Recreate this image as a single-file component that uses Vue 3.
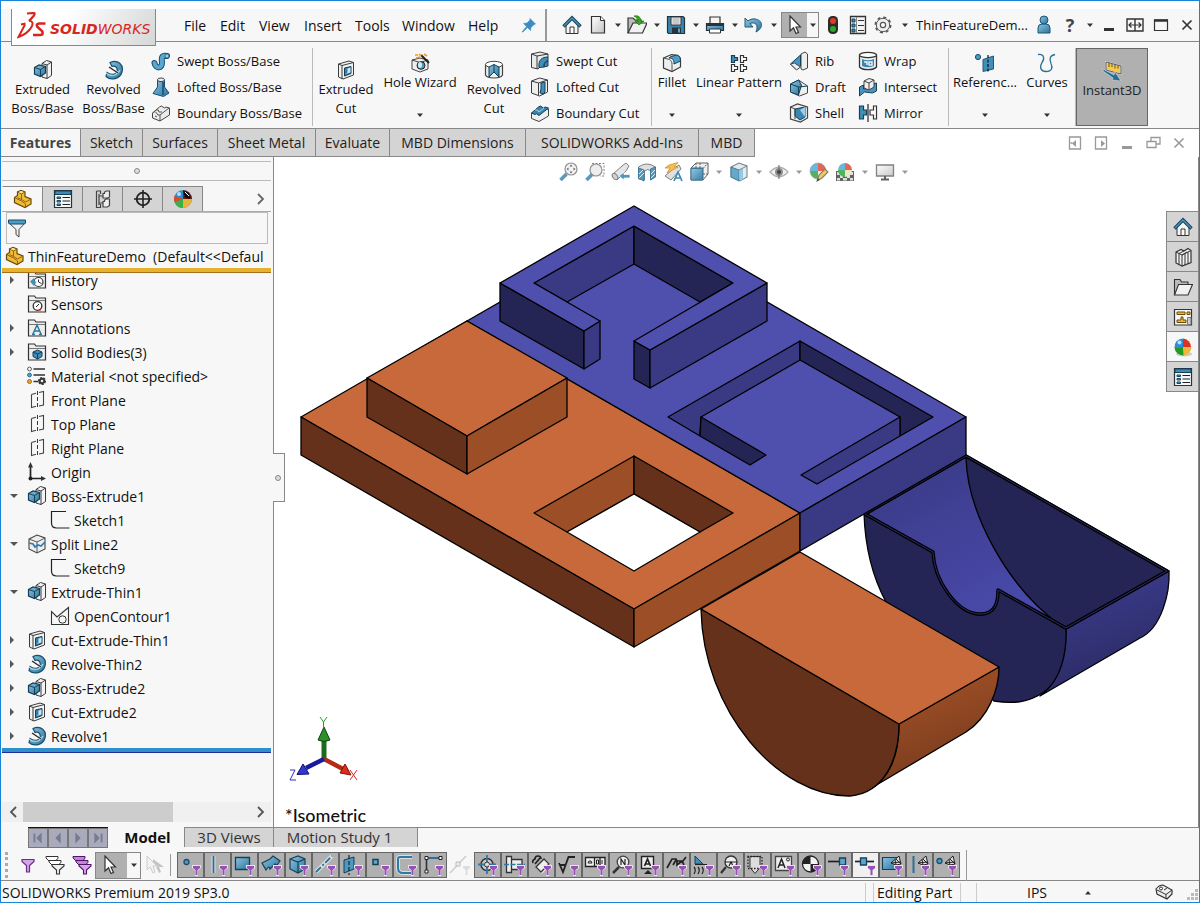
<script setup>
import { ref } from 'vue'

const menus = ['File', 'Edit', 'View', 'Insert', 'Tools', 'Window', 'Help']
const quick = [
  { icon: 'open', label: 'Open' },
  { icon: 'save', label: 'Save' },
  { icon: 'print', label: 'Print' },
  { icon: 'undo', label: 'Undo' },
]
const bossStack = [
  { icon: 'swept', label: 'Swept Boss/Base' },
  { icon: 'loft', label: 'Lofted Boss/Base' },
  { icon: 'boundary', label: 'Boundary Boss/Base' },
]
const cutStack = [
  { icon: 'sweptcut', label: 'Swept Cut' },
  { icon: 'loftcut', label: 'Lofted Cut' },
  { icon: 'boundcut', label: 'Boundary Cut' },
]
const detailStack = [
  { icon: 'rib', label: 'Rib' },
  { icon: 'draft', label: 'Draft' },
  { icon: 'shell', label: 'Shell' },
]
const shapeStack = [
  { icon: 'wrap', label: 'Wrap' },
  { icon: 'intersect', label: 'Intersect' },
  { icon: 'mirror', label: 'Mirror' },
]
const tabs = ['Features', 'Sketch', 'Surfaces', 'Sheet Metal', 'Evaluate', 'MBD Dimensions', 'SOLIDWORKS Add-Ins', 'MBD']
const panelTabs = [
  { icon: 'part', label: 'FeatureManager' },
  { icon: 'props', label: 'PropertyManager' },
  { icon: 'config', label: 'ConfigurationManager' },
  { icon: 'target', label: 'DimXpertManager' },
  { icon: 'ball', label: 'DisplayManager' },
]
const tree = [
  { icon: 'history', label: 'History', state: 'closed' },
  { icon: 'sensors', label: 'Sensors' },
  { icon: 'annot', label: 'Annotations', state: 'closed' },
  { icon: 'bodies', label: 'Solid Bodies(3)', state: 'closed' },
  { icon: 'material', label: 'Material <not specified>' },
  { icon: 'plane', label: 'Front Plane' },
  { icon: 'plane', label: 'Top Plane' },
  { icon: 'plane', label: 'Right Plane' },
  { icon: 'origin', label: 'Origin' },
  { icon: 'extrude', label: 'Boss-Extrude1', state: 'open' },
  { icon: 'sketch', label: 'Sketch1', child: true },
  { icon: 'split', label: 'Split Line2', state: 'open' },
  { icon: 'sketch', label: 'Sketch9', child: true },
  { icon: 'extrude', label: 'Extrude-Thin1', state: 'open' },
  { icon: 'contour', label: 'OpenContour1', child: true },
  { icon: 'cut', label: 'Cut-Extrude-Thin1', state: 'closed' },
  { icon: 'revolve', label: 'Revolve-Thin2', state: 'closed' },
  { icon: 'extrude', label: 'Boss-Extrude2', state: 'closed' },
  { icon: 'cut', label: 'Cut-Extrude2', state: 'closed' },
  { icon: 'revolve', label: 'Revolve1', state: 'closed' },
]
const viewTools = [
  { icon: 'zoomfit', label: 'Zoom to Fit' },
  { icon: 'zoomarea', label: 'Zoom to Area' },
  { icon: 'prevview', label: 'Previous View' },
  { icon: 'section', label: 'Section View' },
  { icon: 'dynannot', label: 'Annotation Views' },
  { icon: 'orient', label: 'View Orientation', more: true },
  { icon: 'display', label: 'Display Style', more: true },
  { icon: 'eye', label: 'Hide/Show', more: true },
  { icon: 'appear', label: 'Edit Appearance' },
  { icon: 'scene', label: 'Apply Scene', more: true },
  { icon: 'monitor', label: 'View Settings', more: true },
]
const taskPane = [
  { icon: 'home', label: 'Resources' },
  { icon: 'books', label: 'Design Library' },
  { icon: 'folder', label: 'File Explorer' },
  { icon: 'palette', label: 'View Palette' },
  { icon: 'ball2', label: 'Appearances', on: true },
  { icon: 'props', label: 'Custom Properties' },
]
const filtersA = ['vertex', 'edge', 'face', 'surf', 'solid', 'axis', 'planes', 'skpoint', 'sksketch', 'sksegment']
const filtersB = ['center', 'cline', 'dim', 'rough', 'gtol', 'note', 'datum', 'weld', 'weldsym', 'dtarget', 'cosmetic', 'block', 'mass', 'routepoint', 'connpoint', 'meshface', 'meshedge', 'meshpoint']
const filterText = ref('')
</script>

<template>
  <svg class="defs" aria-hidden="true">
    <defs>
      <linearGradient id="gb" x1="0" y1="0" x2="1" y2="1"><stop offset="0" stop-color="#8cc4e2" /><stop offset="1" stop-color="#2b749b" /></linearGradient>
      <linearGradient id="gw" x1="0" y1="0" x2="1" y2="1"><stop offset="0" stop-color="#ffffff" /><stop offset="1" stop-color="#c4c4c4" /></linearGradient>
      <linearGradient id="inner" x1="0" y1="0" x2="0.6" y2="1"><stop offset="0" stop-color="#393984" /><stop offset="1" stop-color="#4949aa" /></linearGradient>
      <linearGradient id="outb" x1="0" y1="0" x2="0.4" y2="1"><stop offset="0.3" stop-color="#393987" /><stop offset="1" stop-color="#2a2a62" /></linearGradient>
      <linearGradient id="outo" x1="0" y1="0" x2="0.4" y2="1"><stop offset="0.3" stop-color="#9c4e26" /><stop offset="1" stop-color="#763a1d" /></linearGradient>
    </defs>
    <!-- title bar -->
    <symbol id="home" viewBox="0 0 20 20"><path d="M4 10v8.500h12V10L10 4z" fill="#f4f4f4" stroke="#333" /><path d="M8 18v-6h4v6" fill="#fff" stroke="#333" /><path d="M1.500 11.500 10 3l8.500 8.500" fill="none" stroke="#163f57" stroke-width="3.400" /><path d="M2 11 10 3l8 8" fill="none" stroke="#4a93bb" stroke-width="1.500" /></symbol>
    <symbol id="new" viewBox="0 0 20 20"><path d="M3.500 1.500h9l4 4v12.500h-13z" fill="url(#gw)" stroke="#333" stroke-width="1.200" /><path d="M12.500 1.500v4h4" fill="#fff" stroke="#333" /></symbol>
    <symbol id="open" viewBox="0 0 20 20"><path d="M1 18V3h5l2 2h6v4" fill="#bbb" stroke="#333" stroke-width="1.200" /><path d="M1 18 6 8h14l-4.500 10z" fill="#f1f1f1" stroke="#333" stroke-width="1.200" /><path d="M7 1c4-1 7 1 7 5h3l-5 4-4-4h3c0-2-2-4-4-5z" fill="#35a81b" stroke="#15680a" stroke-width=".6" /></symbol>
    <symbol id="save" viewBox="0 0 20 20"><path d="M1.500 1.500h15.500l1.500 1.500v15.500h-16l-1-1z" fill="#3984ad" stroke="#20323d" stroke-width="1.200" /><path d="M5 2h10v8H5z" fill="#f5f5f5" stroke="#333" /><path d="M6.500 4h7M6.500 6h7M6.500 8h7" stroke="#999" /><path d="M6 12.500h9v6H6z" fill="#263139" /><path d="M12 13.500h2v4h-2z" fill="#5aa5cf" /></symbol>
    <symbol id="print" viewBox="0 0 20 20"><path d="M5 9V2h10v7" fill="#f4f4f4" stroke="#333" stroke-width="1.200" /><path d="M1.500 8.500h17v7h-17z" fill="url(#gb)" stroke="#25343c" stroke-width="1.200" /><path d="M2 10h16" stroke="#25343c" stroke-width="2" /><path d="M4.500 14h11v4h-11z" fill="#fff" stroke="#333" /></symbol>
    <symbol id="undo" viewBox="0 0 20 20"><path d="M1 3v9h8L6 8.500c5-2 9 1 6 8.500 8-4 7-12-1-13-3-.5-5 .5-7 2z" fill="url(#gb)" stroke="#245873" /></symbol>
    <symbol id="cursor" viewBox="0 0 20 20"><path d="M5 1v15l3.500-3.300 2.500 5.800 2.500-1.100-2.500-5.400H15.500z" fill="#fff" stroke="#333" stroke-width="1.200" /></symbol>
    <symbol id="traffic" viewBox="0 0 20 20"><rect x="5" y="1" width="10" height="18" rx="4.500" fill="#2b2b2b" /><circle cx="10" cy="6" r="3" fill="#e33a20" /><circle cx="10" cy="14" r="3" fill="#30a52a" /></symbol>
    <symbol id="list" viewBox="0 0 20 20"><path d="M2.500 1.500h15v17h-15z" fill="#f3f3f3" stroke="#333" stroke-width="1.300" /><path d="M8.500 2v16" stroke="#888" /><path d="M4 4h3v3H4zM4 9h3v3H4zM4 14h3v3H4z" fill="#3c8bb5" stroke="#174660" /><path d="M10 5.500h6M10 10.500h6M10 15.500h6" stroke="#333" /></symbol>
    <symbol id="gear" viewBox="0 0 20 20"><circle cx="10" cy="10" r="6.700" fill="#eee" stroke="#555" stroke-width="1" /><circle cx="10" cy="10" r="7.700" fill="none" stroke="#555" stroke-width="1.500" stroke-dasharray="3.100 2.950" /><circle cx="10" cy="10" r="2.600" fill="#fff" stroke="#555" stroke-width="1.200" /></symbol>
    <symbol id="person" viewBox="0 0 20 20"><path d="M4 18v-5q0-4 4-4h4q4 0 4 4v5z" fill="url(#gb)" stroke="#1d5475" /><circle cx="10" cy="5" r="4" fill="url(#gb)" stroke="#1d5475" /></symbol>
    <symbol id="winmin" viewBox="0 0 20 20"><path d="M5 14.500h10" stroke="#333" stroke-width="3" /></symbol>
    <symbol id="winsplit" viewBox="0 0 20 20"><path d="M2 4h16v12H2zM10 4v12" fill="none" stroke="#333" stroke-width="1.400" /><path d="M4 10h12M6.500 7.500 4 10l2.500 2.500M13.500 7.500 16 10l-2.500 2.500" stroke="#333" fill="none" stroke-width="1.200" /></symbol>
    <symbol id="winmax" viewBox="0 0 20 20"><path d="M3.500 5h13v10.500h-13z" fill="none" stroke="#333" stroke-width="1.200" /><path d="M3 5.500h14" stroke="#333" stroke-width="2.500" /></symbol>
    <symbol id="winclose" viewBox="0 0 20 20"><path d="m5.500 5.500 9 9m0-9-9 9" stroke="#333" stroke-width="1.700" /></symbol>
    <symbol id="pin" viewBox="0 0 20 20"><path d="m11 3.500 5.500 5.500-1.500.5-3 3-.5 3-3-3-4.500 4.500L3 17l4.500-5.500-3-3 3.500-.5 3-3z" fill="#3c8bc4" stroke="#3c8bc4" stroke-width=".6" /></symbol>
    <symbol id="down" viewBox="0 0 20 20"><path d="M7 8.500h6L10 12z" fill="#333" /></symbol>
    <symbol id="downgrey" viewBox="0 0 20 20"><path d="M7 8.500h6L10 12z" fill="#999" /></symbol>
    <symbol id="up" viewBox="0 0 20 20"><path d="M7 11.500h6L10 8z" fill="#333" /></symbol>
    <symbol id="dockl" viewBox="0 0 20 20"><path d="M4.500 4h11v12h-11zM5.500 10h2" fill="none" stroke="#999" stroke-width="1.300" /><path d="M11 7v7l-4-3.500z" fill="#999" /></symbol>
    <symbol id="dockr" viewBox="0 0 20 20"><path d="M4.500 4h11v12h-11z" fill="none" stroke="#999" stroke-width="1.300" /><path d="M10 7v7l4-3.500z" fill="#999" /></symbol>
    <symbol id="mmin" viewBox="0 0 20 20"><path d="M5 14.500h10" stroke="#999" stroke-width="3" /></symbol>
    <symbol id="mrest" viewBox="0 0 20 20"><path d="M8 8V4.500h9V11h-4M4 8.500h9v6H4z" fill="none" stroke="#999" stroke-width="1.300" /></symbol>
    <symbol id="mclose" viewBox="0 0 20 20"><path d="m5.500 5.500 9 9m0-9-9 9" stroke="#999" stroke-width="1.600" /></symbol>
    <!-- features -->
    <symbol id="extrude" viewBox="0 0 20 20"><path d="m9 3.500 4.500-3L18.500 2v13.500l-4.500 3L9 17z" fill="#f2f2f2" stroke="#3b3b3b" /><path d="m9 3.500 5 1.500v13.500M14 5l4.500-3" fill="none" stroke="#3b3b3b" /><path d="m1.500 7.500 4.500-2.500 6.500 1.500V13l-5 3.500-6-2.500z" fill="url(#gb)" stroke="#123f58" stroke-width="1.200" /><path d="m1.500 7.500 6 2 5-3M7.500 9.500v7" fill="none" stroke="#123f58" /></symbol>
    <symbol id="revolve" viewBox="0 0 20 20"><path d="M6 2.500C14-1 20 5 18 12c-2 7-11 9-16 4.500l1-4c5 3 9 2.500 10-1.500 1-3-2-6-5-4.500z" fill="url(#gb)" stroke="#174f70" stroke-width="1.200" /><path d="M2 13c5 4 11 3 14-3" fill="none" stroke="#a9d6ee" stroke-width="1.200" /><path d="m5 7 9 6" stroke="#eee" stroke-width="2.600" /><path d="m5 7 9 6" stroke="#222" stroke-width="1.100" /></symbol>
    <symbol id="swept" viewBox="0 0 20 20"><path d="M3.500 12c1 6 8 6 7.500-1-1-6 1-7 5-6" fill="none" stroke="#174f70" stroke-width="6" stroke-linecap="round" /><path d="M3.500 12c1 6 8 6 7.500-1-1-6 1-7 5-6" fill="none" stroke="#5ba6ce" stroke-width="4" stroke-linecap="round" /><circle cx="16" cy="5" r="2" fill="#9bd1ec" stroke="#174f70" stroke-width=".7" /></symbol>
    <symbol id="loft" viewBox="0 0 20 20"><path d="M6.500 3h7v7l4.500 6-5.500 3.500L2 16.500 6.500 10z" fill="url(#gb)" stroke="#174f70" /><path d="M12 5v13" stroke="#245f81" stroke-width="2" /><ellipse cx="10" cy="2.800" rx="3.500" ry="1.800" fill="#eee" stroke="#444" /></symbol>
    <symbol id="boundary" viewBox="0 0 20 20"><path d="m1.500 10 7-6q2-2 3.500 0t3 0l3.500 1v7L9 18l-7.500-3z" fill="#ececec" stroke="#444" /><path d="M1.500 10q3-3 4 0t3.500 2l9-7M9 12v6M5 7q3-1 3 2l3 0M4 13l2 1" fill="none" stroke="#555" /></symbol>
    <symbol id="cut" viewBox="0 0 20 20"><path d="M2.500 4 13 1l4.500 1.500V15L7 19l-4.500-2z" fill="#f2f2f2" stroke="#3b3b3b" /><path d="M2.500 4 6 5.500l11.500-3M6 5.500V19" fill="none" stroke="#3b3b3b" /><path d="m8.500 8 6.500-1.500v7L8.500 16z" fill="#2f81ab" stroke="#173e54" /><path d="m9.500 14 2-1.500V8.500l3-1v5z" fill="#cde6f3" /></symbol>
    <symbol id="holewiz" viewBox="0 0 20 20"><path d="m2 7 8-2 8 2v9l-8 3-8-3z" fill="#eee" stroke="#444" /><path d="m2 7 8 2.500L18 7" fill="none" stroke="#444" /><ellipse cx="11" cy="12.500" rx="4" ry="3.800" fill="#4996c1" stroke="#222" /><ellipse cx="10" cy="12" rx="2" ry="3" fill="#cfe9f6" /><path d="m11 2 8 8" stroke="#222" stroke-width="2" /><path d="M5 2h3M9 1l2 2M14 1l3 2M6 5l4-1" stroke="#f29a1f" stroke-width="1.700" /></symbol>
    <symbol id="revcut" viewBox="0 0 20 20"><path d="M1.500 5v10c2 4 15 4 17 0V5z" fill="#eee" stroke="#444" stroke-width="1.200" /><ellipse cx="10" cy="4.500" rx="8.500" ry="3.200" fill="#fff" stroke="#444" /><path d="m5 7 5-2.500L15 7v10l-5-5-5 5z" fill="url(#gb)" stroke="#123f58" /><path d="M10 4.500V12" stroke="#123f58" /></symbol>
    <symbol id="sweptcut" viewBox="0 0 20 20"><path d="M1.500 3 10 1l8 2v3L8 18l-6.500-1.500z" fill="#eaeaea" stroke="#3b3b3b" /><path d="M1.500 3 7 5v13M7 5l11-2" fill="none" stroke="#3b3b3b" /><path d="M9 16.500C8 9 12 6 18 6v9l-4 1c0-3 1-5 4-6-4 0-4 3-4 6z" fill="#3f8fba" stroke="#174055" /></symbol>
    <symbol id="loftcut" viewBox="0 0 20 20"><path d="m1.500 4 8-3 8 2v12l-8 4-8-3z" fill="#eee" stroke="#3b3b3b" /><path d="m1.500 4 7 2 9-3M8.500 6v12" fill="none" stroke="#3b3b3b" /><path d="m11 6 4-1v9l-1 3-4-1 1-4z" fill="#3f8fba" stroke="#174055" /></symbol>
    <symbol id="boundcut" viewBox="0 0 20 20"><path d="m1.500 10 17-4v7L9 18.500l-7.500-3z" fill="#eee" stroke="#444" /><path d="m1.500 10 7-6q2-2 3.500 0t3 0l3.500 1L9 12.500q-3-3-4-1z" fill="#3a86b0" stroke="#174055" /><path d="M5 7q3-1 4 2l5-4" fill="none" stroke="#a5d3ec" /></symbol>
    <symbol id="fillet" viewBox="0 0 20 20"><path d="m1.500 5 8-3.500c5 0 9 2 9 6V14L10 18.500 1.500 15z" fill="#eee" stroke="#3b3b3b" stroke-width="1.200" /><path d="M9 3.500 15 2c3 1 3.500 3 3.500 6L12 11c0-4-1-6-5-6z" fill="#4f9cc5" stroke="#174055" /><path d="m1.500 5 6 1.500c2 1 2.500 3 2.500 5v7" fill="none" stroke="#555" /></symbol>
    <symbol id="linpat" viewBox="0 0 20 20"><path d="M2.500 2.500h3v2h3v3h-3v2h-3z" fill="#3f8fba" stroke="#173f55" stroke-width="1.200" /><path d="M11.500 2.500h3v2h3v3h-3v2h-3zM2.500 11.500h3v2h3v3h-3v2h-3zM11.500 11.500h3v2h3v3h-3v2h-3z" fill="#fff" stroke="#333" stroke-width="1.200" /></symbol>
    <symbol id="rib" viewBox="0 0 20 20"><path d="m12 3 4-2 2.500 2v14L14 19l-2-1z" fill="#eee" stroke="#444" /><path d="m1.500 13 10-9v11l-5 3z" fill="#4795bf" stroke="#174055" /><path d="m1.500 13 4-1 6 4-4 3z" fill="#eee" stroke="#444" /></symbol>
    <symbol id="draft" viewBox="0 0 20 20"><path d="m1.500 7 8-4 9 6v7l-8 3-9-4z" fill="#eee" stroke="#444" /><path d="m1.500 7 8-4 3 5-3 10-8-3z" fill="url(#gb)" stroke="#174055" /><path d="m1.500 7 8 3 9-1M9.500 10v8" fill="none" stroke="#174055" /></symbol>
    <symbol id="shell" viewBox="0 0 20 20"><path d="m1.500 4 7-3 10 3v11l-7 4-10-3z" fill="#eee" stroke="#444" stroke-width="1.200" /><path d="m6 6 10-2v10l-5 3-5-4z" fill="#3a86b0" stroke="#174055" /><path d="m11 7 5 7V4z" fill="#9bcfeb" /><path d="M1.500 4 6 6v10" fill="none" stroke="#444" /></symbol>
    <symbol id="wrap" viewBox="0 0 20 20"><path d="M1.500 4v12c3 3.500 14 3.500 17 0V4z" fill="#eee" stroke="#333" stroke-width="1.300" /><ellipse cx="10" cy="4" rx="8.500" ry="2.700" fill="#fff" stroke="#333" stroke-width="1.200" /><path d="M4 8q6 2.500 12 0v7q-6 2.500-12 0z" fill="#3a86b0" /><path d="M6 11h3v3M11 11h3v3h-3z" fill="none" stroke="#e8f4fa" stroke-width="1.500" /></symbol>
    <symbol id="intersect" viewBox="0 0 20 20"><path d="m1.500 10 4-2v4l9-1V7l4-1v8l-4 2-8-1-5 4z" fill="#4795bf" stroke="#174055" /><path d="m6 4 5-2.500L16 3v7l-5 3-5-2z" fill="#eee" stroke="#444" /><path d="m6 4 5 2 5-3M11 6v7" fill="none" stroke="#444" /></symbol>
    <symbol id="mirror" viewBox="0 0 20 20"><path d="M1.500 3h4v4h3v5h-3v4h-4z" fill="#3f8fba" stroke="#174055" stroke-width="1.200" /><path d="M10 1v18" stroke="#222" stroke-width="1.200" /><path d="M18.500 3h-3v4h-3.500v5h3.500v4h3z" fill="#fff" stroke="#333" stroke-width="1.200" /></symbol>
    <symbol id="refgeo" viewBox="0 0 20 20"><circle cx="3" cy="4" r="2.600" fill="#4d9ac4" stroke="#174f70" /><path d="M8 6.500 18.500 3v13L8 18.500z" fill="#3f8fba" stroke="#205a7b" /><path d="M13 2v17" stroke="#111" stroke-dasharray="3 1.500" stroke-width="1.200" /></symbol>
    <symbol id="curves" viewBox="0 0 20 20"><path d="M1 1.500c6-1 7 4 4 8-3 5-1 9 4 9 6 0 7-4 5-8-2-5-1-8 4-9" fill="none" stroke="#2b7096" stroke-width="1.300" /></symbol>
    <symbol id="instant" viewBox="0 0 20 20"><path d="m4 1 15 4v8L4 9z" fill="#f7ca45" stroke="#eee" stroke-width="1.500" /><path d="m4 1 15 4v8L4 9zM7 2v4M10 3v3M13 3.500v4M16 4.500v3" fill="none" stroke="#333" stroke-width=".8" /><path d="m1 8 11 6 1-3 6 9-9-1 1-2L1 10z" fill="#256e97" stroke="#ddd" stroke-width=".6" /></symbol>
    <!-- tree -->
    <symbol id="part" viewBox="0 0 20 20"><path d="m1.500 8.500 3-2V3L8 1.500 12 3v4.500l6 2.500v5l-6 3.500-10.500-5z" fill="#f2bb36" stroke="#6b4a08" stroke-width="1.200" /><path d="m4.500 3 4 2L12 3M8.500 5v5.500L12.500 13 18 10M1.500 8.500l7 3.500 4 3v3M8.500 10.500l-4-2" fill="none" stroke="#8b6514" /><path d="m5.500 3 2.500-1 2.700 1-2.500 1.200z" fill="#ffe794" /></symbol>
    <symbol id="props" viewBox="0 0 20 20"><path d="M1.500 1.500h17v17h-17z" fill="#f7f7f7" stroke="#25333b" stroke-width="1.200" /><path d="M2 2h16v3.500H2z" fill="#3c8bb5" stroke="#163f57" /><path d="M4 8h3.500v1.500H4zM4 11.500h3.500V13H4zM4 15h3.500v1.500H4z" fill="#5aa5cf" stroke="#174660" /><path d="M9.500 8.500H17M9.500 12H17M9.500 15.500H17" stroke="#222" stroke-width="1.200" /></symbol>
    <symbol id="config" viewBox="0 0 20 20"><path d="M3.500 2h4v3M3.500 2v16.500h4V15M6 5v11M6 7h5M6 14h5" fill="none" stroke="#444" stroke-width="1.200" /><path d="M10 4.500h1.500V3l2-1h3v6l-2 1H10zM10 12.500h1.500V11l2-1h3v6.500l-2 1.500H10z" fill="#eee" stroke="#444" stroke-width="1.200" /></symbol>
    <symbol id="target" viewBox="0 0 20 20"><circle cx="10" cy="10" r="6.300" fill="none" stroke="#222" stroke-width="1.800" /><path d="M10 1v18M1 10h18" stroke="#222" stroke-width="1.600" /></symbol>
    <symbol id="ball" viewBox="0 0 20 20"><circle cx="10" cy="10" r="9" fill="#2e8dcd" /><path d="M10 10V1a9 9 0 0 1 9 9z" fill="#7a1d17" /><path d="M10 10h9a9 9 0 0 1-9 9z" fill="#e7b53b" /><path d="M10 10v9a9 9 0 0 1-8.500-6z" fill="#3fae49" /><path d="M1.500 7a9 9 0 0 0 0 6L10 10z" fill="#e8441e" /><path d="m10 2 2 7 6 1-3-7z" fill="#111" /><path d="m12 3 4 4" stroke="#fff" /><circle cx="6" cy="5" r="2" fill="#b5dcf4" /></symbol>
    <symbol id="ball2" viewBox="0 0 20 20"><ellipse cx="11" cy="17" rx="8" ry="2.500" fill="#ccc" /><path d="M10 10V1.500A8.500 8.500 0 0 0 1.500 11z" fill="#2f8cd6" /><path d="M10 10V1.500a8.500 8.500 0 0 1 8 8.500z" fill="#dd3220" /><path d="M10 10h8.500a8.500 8.500 0 0 1-8 8.500z" fill="#eeb83e" /><path d="M10 10l.5 8.500a8.500 8.500 0 0 1-9-8z" fill="#209a20" /><circle cx="6.500" cy="5.500" r="2" fill="#b8e0f8" /></symbol>
    <symbol id="funnel" viewBox="0 0 20 20"><path d="M2 5h16l-6 6.500V19l-3-2.500v-5z" fill="#eee" stroke="#444" /><path d="M1.500 2h17v3l-1 1h-15l-1-1z" fill="#4b9bc5" stroke="#1b4a64" /></symbol>
    <symbol id="fold" viewBox="0 0 20 20"><path d="M1.500 18V2h6l1.500 2h9.500v14z" fill="#eee" stroke="#333" stroke-width="1.200" /><path d="M2 6.500h16" stroke="#777" /></symbol>
    <symbol id="history" viewBox="0 0 20 20"><use href="#fold" /><circle cx="11.500" cy="12" r="4.500" fill="#fff" stroke="#333" stroke-width="1.200" /><path d="M11.500 9.500V12l3 1.500" fill="none" stroke="#333" /><path d="M3 11.500 7 8l.5 3.500h2L7 16z" fill="#3f8fba" /></symbol>
    <symbol id="sensors" viewBox="0 0 20 20"><use href="#fold" /><circle cx="10.500" cy="12" r="4.300" fill="#fff" stroke="#333" stroke-width="1.300" /><path d="m9 13 3-3" stroke="#222" /><path d="m10.500 16.500 3.500-2.500v2.500z" fill="#d62020" /></symbol>
    <symbol id="annot" viewBox="0 0 20 20"><use href="#fold" /><path d="m6 16 4-9 4 9M7.500 13h5M5 16.500h3M12 16.500h3" fill="none" stroke="#2d779f" stroke-width="1.500" /></symbol>
    <symbol id="bodies" viewBox="0 0 20 20"><use href="#fold" /><path d="m6 10 4.500-2L15 10v4.500L10.500 17 6 14.500z" fill="#3f8fba" stroke="#123f58" /><path d="m6 10 4.500 2L15 10m-4.500 2v5" fill="none" stroke="#123f58" /></symbol>
    <symbol id="material" viewBox="0 0 20 20"><circle cx="2.500" cy="3" r="1.900" fill="#fff" stroke="#555" /><circle cx="2.500" cy="9" r="1.900" fill="#4fa3d1" stroke="#2c6c92" /><circle cx="2.500" cy="15.500" r="2" fill="#f0a02c" stroke="#a8690f" /><path d="M6.500 3H18M6.500 9H18M6.500 15.500h5" stroke="#333" stroke-width="1.500" /><circle cx="15" cy="15" r="3" fill="#333" stroke="#333" stroke-width="2" stroke-dasharray="2 1" /><circle cx="15" cy="15" r="1.300" fill="#eee" /></symbol>
    <symbol id="plane" viewBox="0 0 20 20"><path d="M4.500 4.500 9 3.200M4.500 4.500v13L9 16.200M12 2.500l4.500-1v13.500l-4.500 1" fill="none" stroke="#444" stroke-width="1.100" /><path d="M10.500 1v18" stroke="#333" stroke-dasharray="4 2" /></symbol>
    <symbol id="origin" viewBox="0 0 20 20"><path d="M3.500 17V4M3.500 16.500h12" fill="none" stroke="#222" stroke-width="1.700" /><path d="M1 5.500 3.500 0 6 5.500zM14 14l5 2.500-5 2.500z" fill="#333" /><circle cx="3.500" cy="16.500" r="2" fill="#222" /></symbol>
    <symbol id="sketch" viewBox="0 0 20 20"><path d="M16 1.500H1.500V13q0 5 5 5h13" fill="none" stroke="#222" stroke-width="1.200" /></symbol>
    <symbol id="contour" viewBox="0 0 20 20"><path d="M1.500 18.500V5.500L7 11 18.500 1.500v17z" fill="none" stroke="#333" stroke-width="1.100" /><circle cx="12.500" cy="13.500" r="3.700" fill="#f7f7f7" stroke="#333" /></symbol>
    <symbol id="split" viewBox="0 0 20 20"><path d="m2 5 8-4 8 3v11l-8 4-8-4z" fill="#eee" stroke="#444" stroke-width="1.100" /><path d="m2 5 8 3 8-4M10 8v11" fill="none" stroke="#555" /><path d="m2 9 4 1 2 3 3-2 3 1 4-4" fill="none" stroke="#2a7db0" stroke-width="1.700" /></symbol>
    <!-- task pane -->
    <symbol id="books" viewBox="0 0 20 20"><path d="m3 5 5-2.500 3 1.500 4-2.500 3 2v12L9 19l-6-3z" fill="#f2f2f2" stroke="#333" stroke-width="1.200" /><path d="m3 5 3 1.500V18M6 6.500 11 4M9 8v11M6 6.500 9 8l5-3M12 6.500V18M9 8l6-3 3-1.500M15 5v11.500" fill="none" stroke="#333" /></symbol>
    <symbol id="folder" viewBox="0 0 20 20"><path d="M1.500 18V2.500H7L8.500 5H15v3" fill="#bbb" stroke="#333" stroke-width="1.100" /><path d="M1.500 18 5.500 7.500h14L15 18z" fill="#f1f1f1" stroke="#333" stroke-width="1.100" /></symbol>
    <symbol id="palette" viewBox="0 0 20 20"><path d="M1.500 2.500h17v15.500h-17z" fill="#f7f7f7" stroke="#333" stroke-width="1.200" /><path d="M4 5h8v2.500H4zM14 5h3v2.500h-3zM8 10v3H4v2.500h9V13h-3v-3z" fill="#f2b92e" stroke="#6b4a08" /><path d="M14.500 10.500H18v7h-3.500z" fill="#ccc" stroke="#777" /></symbol>
    <!-- view toolbar -->
    <symbol id="zoomfit" viewBox="0 0 20 20"><path d="m1.500 18 6-6" stroke="#4c91b6" stroke-width="3.500" /><circle cx="12" cy="7" r="6" fill="#f2f2f2" stroke="#888" stroke-width="1.200" /><path d="m12 2.500 1.500 2h-3zM12 11.500l1.500-2h-3zM7.500 7l2-1.500v3zM16.500 7l-2-1.500v3z" fill="#555" /></symbol>
    <symbol id="zoomarea" viewBox="0 0 20 20"><path d="M7 1.500h12V14h-4" fill="none" stroke="#777" stroke-dasharray="2 1.500" /><path d="m1.500 18 6-6" stroke="#4c91b6" stroke-width="3.500" /><circle cx="11" cy="8" r="6" fill="#ececec" stroke="#888" stroke-width="1.200" /></symbol>
    <symbol id="prevview" viewBox="0 0 20 20"><path d="m2 12 9-8 4-3 3 3-3 5-9 9z" fill="#e3e3e3" stroke="#777" /><ellipse cx="4" cy="14.500" rx="2.300" ry="3.500" transform="rotate(-40 4 14.500)" fill="#ccc" stroke="#777" /><path d="m8 14 5-4v2.500h6v3.500h-6V18z" fill="#3d8fbe" stroke="#fff" stroke-width=".7" /></symbol>
    <symbol id="section" viewBox="0 0 20 20"><path d="M1.500 5q8-6 17 0v9l-4 3V9q-4-3-7 0v9l-6-1z" fill="#ddd" stroke="#777" /><path d="M1.500 6 7 8v11l-5.500-3zM13.500 7l5-2v10l-5 3z" fill="#4c91b6" stroke="#2b6e95" /><path d="m2 12 4-4M2 16l5-5M14 12l4-4M14 16l4-4" stroke="#d8edf8" /></symbol>
    <symbol id="dynannot" viewBox="0 0 20 20"><path d="m2 14 9-8 5-3 2 4-10 11z" fill="#ddd" stroke="#777" /><path d="M6 3 15 .5 11 5l4 0-11 6 3-5H2z" fill="#f6b942" stroke="#c98216" stroke-width=".7" /><path d="m11 19 4-9 4 9M12.500 16h5" fill="none" stroke="#2e81ad" stroke-width="1.700" /></symbol>
    <symbol id="orient" viewBox="0 0 20 20"><path d="m2 6 5-5h12v11l-5 6M2 6h12v12H2z" fill="#eee" stroke="#555" /><path d="M2 6.500h11.500V18H2z" fill="url(#gb)" stroke="#2b6e95" /><path d="M14 6.500 19 1M7 1v5M14 12l5 0M11 1v5" stroke="#555" stroke-dasharray="2 1" /></symbol>
    <symbol id="display" viewBox="0 0 20 20"><path d="m2 5 8-4 8 3v11l-7 4-9-4z" fill="#ddecf3" stroke="#777" stroke-width="1.100" /><path d="m2 5 8 3v11l-8-4z" fill="#5aa0c6" stroke="#377799" /><path d="m10 8 4-2v11l-3 2z" fill="#8ec4df" /><path d="m10 8 8-4" stroke="#777" /></symbol>
    <symbol id="eye" viewBox="0 0 20 20"><path d="M1 10q9-9.500 18 0-9 9.500-18 0z" fill="#f0f0f0" stroke="#aaa" stroke-width="1.300" /><circle cx="10" cy="10" r="4" fill="#888" /><circle cx="10" cy="10" r="2" fill="#222" /><path d="M10 3v14" stroke="#555" /></symbol>
    <symbol id="sphere" viewBox="0 0 20 20"><path d="M9 9V1a8 8 0 0 0-8 9z" fill="#5db1dd" /><path d="M9 9V1a8 8 0 0 1 8 8z" fill="#e05a4a" /><path d="M9 9h8a8 8 0 0 1-8 8z" fill="#eee" /><path d="M9 9v8a8 8 0 0 1-8-8z" fill="#42ad52" /><circle cx="9" cy="9" r="8" fill="none" stroke="#999" stroke-width=".7" /></symbol>
    <symbol id="appear" viewBox="0 0 20 20"><use href="#sphere" /><path d="m8 19 2-6 6-6 3 3-6 6z" fill="#f2c25a" stroke="#775" stroke-width="1.100" /><path d="m8 19 .8-3 2 2z" fill="#333" /></symbol>
    <symbol id="scene" viewBox="0 0 20 20"><path d="M1 9h18v10H1z" fill="#555" /><path d="M2 10h3v3H2zM15 10h3v3h-3zM5 13h3v3H5zM12 13h3v3h-3zM2 16h3v2.500H2zM8 16h4v2.500H8zM15 16h3v2.500h-3z" fill="#ddd" /><path d="M10 8V1a7 7 0 0 0-7 7z" fill="#5db1dd" /><path d="M10 8V1a7 7 0 0 1 7 7z" fill="#e05a4a" /><path d="M10 8h7a7 7 0 0 1-7 7z" fill="#eee4c0" /><path d="M10 8v7a7 7 0 0 1-7-7z" fill="#42ad52" /></symbol>
    <symbol id="monitor" viewBox="0 0 20 20"><path d="M1.500 3h17v11h-17z" fill="url(#gw)" stroke="#777" stroke-width="1.300" /><path d="M10 14v3M6 17.500h8" stroke="#555" stroke-width="2" /></symbol>
    <!-- selection filters -->
    <symbol id="fnl" viewBox="0 0 25 24"><path d="M14 12h9v3l-3 2.500V23h-3v-5.500L14 15z" fill="#e9e4ec" /><path d="M15 13h7v2l-2.500 2v5h-2v-5L15 15z" fill="#9850b4" /></symbol>
    <symbol id="vertex" viewBox="0 0 25 24"><circle cx="8.500" cy="9" r="2.500" fill="#4f9bc4" stroke="#174f70" stroke-width="1.300" /></symbol>
    <symbol id="edge" viewBox="0 0 25 24"><path d="M8.500 3v17" stroke="#ddd" stroke-width="4" /><path d="M8.500 3v17" stroke="#2b7096" stroke-width="1.800" /></symbol>
    <symbol id="face" viewBox="0 0 25 24"><path d="M3.500 4.500h14v12h-14z" fill="url(#gb)" stroke="#174055" stroke-width="1.300" /></symbol>
    <symbol id="surf" viewBox="0 0 25 24"><path d="m3 10 8-4 3-3 7 5-3 4-2-1-5 5q-1-4-4 1z" fill="url(#gb)" stroke="#174055" stroke-width="1.200" /></symbol>
    <symbol id="solid" viewBox="0 0 25 24"><path d="m4 6 8-3 7 3v10l-7 4-8-4z" fill="url(#gb)" stroke="#174055" stroke-width="1.200" /><path d="m4 6 8 3 7-3M12 9v11" fill="none" stroke="#174055" stroke-width="1.200" /></symbol>
    <symbol id="axis" viewBox="0 0 25 24"><path d="M3 19 19 3" stroke="#ddd" stroke-width="4" /><path d="M3 19 19 3" stroke="#2b7096" stroke-width="1.800" stroke-dasharray="7 2 2 2" /></symbol>
    <symbol id="planes" viewBox="0 0 25 24"><path d="m4 7 10-3v12L4 20z" fill="#4b98c0" stroke="#174055" /><path d="M9 2v20" stroke="#222" stroke-dasharray="4 2" stroke-width="1.200" /></symbol>
    <symbol id="skpoint" viewBox="0 0 25 24"><path d="M6 6.500h5v5H6z" fill="#61a9cf" stroke="#174055" stroke-width="1.500" /></symbol>
    <symbol id="sksketch" viewBox="0 0 25 24"><path d="M18 4H6Q4 4 4 6v9q0 5 5 5h9" fill="none" stroke="#ddd" stroke-width="4" /><path d="M18 4H6Q4 4 4 6v9q0 5 5 5h9" fill="none" stroke="#2b7ba8" stroke-width="2" /></symbol>
    <symbol id="sksegment" viewBox="0 0 25 24"><path d="M5.500 18V5H19" fill="none" stroke="#333" stroke-width="1.600" /><path d="M7 5h10" stroke="#2b7096" stroke-width="2" /><path d="M4 3.500h3v3H4zM18 3.500h3v3h-3zM4 17h3v3H4z" fill="#fff" stroke="#222" /></symbol>
    <symbol id="midpoint" viewBox="0 0 25 24"><path d="M2 20 18 3" stroke="#ccc" stroke-width="1.500" /><path d="M8 9h4v4H8z" fill="#eee" stroke="#bbb" /><path d="M15 13h7v2l-2.500 2v5h-2v-5L15 15z" fill="#ddd" /></symbol>
    <symbol id="center" viewBox="0 0 25 24"><circle cx="12" cy="11.500" r="6" fill="#ccc" stroke="#333" stroke-width="1.600" /><path d="M12 2v19M3 11.500h18" stroke="#2b7ba8" stroke-width="1.800" /><circle cx="12" cy="11.500" r="2.500" fill="#ddd" stroke="#333" /></symbol>
    <symbol id="cline" viewBox="0 0 25 24"><path d="M4.500 3.500h5v16h-5zM9.500 6.500H20v10H9.500z" fill="#eee" stroke="#333" stroke-width="1.300" /><path d="M2 11.500h21" stroke="#2b7ba8" stroke-width="1.300" stroke-dasharray="5 1.500" /></symbol>
    <symbol id="dim" viewBox="0 0 25 24"><path d="m10 18 9-9" stroke="#eee" stroke-width="8" /><path d="m7 14 8-8 5 5-8 8z" fill="#eee" stroke="#333" stroke-width="1.300" /><path d="M4 10q-1-3 2-4 0-3 3-3t3 3M6 11l5-6" fill="none" stroke="#222" stroke-width="1.700" /></symbol>
    <symbol id="rough" viewBox="0 0 25 24"><path d="m3 10 4 9L12.500 4H19M4.500 12h5" fill="none" stroke="#222" stroke-width="1.800" /></symbol>
    <symbol id="gtol" viewBox="0 0 25 24"><path d="M2.500 4.500H22v9H2.500zM11.500 4.500v9M17 5v8" fill="#eee" stroke="#222" stroke-width="1.300" /><path d="M5 10h4l-1-2H6zM13.500 7h2v4h-2zM19 7v4" fill="none" stroke="#222" /></symbol>
    <symbol id="note" viewBox="0 0 25 24"><path d="m3 20 6-6" stroke="#333" stroke-width="2.500" /><circle cx="13" cy="9" r="5.800" fill="#eee" stroke="#444" stroke-width="1.300" /><path d="M11 12V6l4 6V6" fill="none" stroke="#222" stroke-width="1.200" /></symbol>
    <symbol id="datum" viewBox="0 0 25 24"><path d="M4.500 3.500h12v12h-12z" fill="#eee" stroke="#222" stroke-width="1.400" /><path d="m7.500 13 3-7 3 7M8.500 11h4" fill="none" stroke="#222" stroke-width="1.700" /><path d="M7 21h8l-4-4z" fill="#222" /></symbol>
    <symbol id="weld" viewBox="0 0 25 24"><path d="m3 15 5-9h4l1 2h6l3-4M12 7l-3 5M13 8v4l5-4M18 8l2 4" fill="none" stroke="#222" stroke-width="1.700" /></symbol>
    <symbol id="weldsym" viewBox="0 0 25 24"><path d="M4 3v8h8z" fill="#3f8fba" stroke="#174055" /><path d="M3 14q2.500 3 0 7M7 14q2.500 3 0 7M11 14q2.500 3 0 7M4 11.500h12" fill="none" stroke="#222" stroke-width="1.200" /></symbol>
    <symbol id="dtarget" viewBox="0 0 25 24"><path d="m3 20 5-6" stroke="#333" stroke-width="2.200" /><circle cx="13" cy="9" r="6" fill="#eee" stroke="#333" stroke-width="1.300" /><path d="M7 9h12M11 13l2-4 2 4" fill="none" stroke="#222" stroke-width="1.200" /></symbol>
    <symbol id="cosmetic" viewBox="0 0 25 24"><path d="M5 3.500v11l5 6 5-6v-11z" fill="#ddd" stroke="#333" /><path d="M3 3.500v12h14v-12z" fill="none" stroke="#222" stroke-width="1.300" stroke-dasharray="1.500 1.500" /></symbol>
    <symbol id="block" viewBox="0 0 25 24"><path d="M3.500 3.500h16v14h-16z" fill="#eee" stroke="#444" stroke-width="1.300" /><path d="m6 15 3.500-9 3.500 9M7 12h5" fill="none" stroke="#222" stroke-width="1.500" /><circle cx="16" cy="6.500" r="1.500" fill="none" stroke="#222" /></symbol>
    <symbol id="mass" viewBox="0 0 25 24"><circle cx="11.500" cy="11" r="8" fill="#f3f3f3" stroke="#222" stroke-width="1.300" /><path d="M11.500 11V3a8 8 0 0 0-8 8zM11.500 11v8a8 8 0 0 0 8-8z" fill="#222" /></symbol>
    <symbol id="routepoint" viewBox="0 0 25 24"><path d="M2 8.500h12" stroke="#222" stroke-width="1.700" /><path d="M13.500 5h6v7h-6z" fill="#5aa5cf" stroke="#174055" stroke-width="1.300" /></symbol>
    <symbol id="connpoint" viewBox="0 0 25 24"><path d="M2 8.500h19" stroke="#222" stroke-width="1.700" /><path d="M7.500 5h6v7h-6z" fill="#5aa5cf" stroke="#174055" stroke-width="1.300" /></symbol>
    <symbol id="mesh" viewBox="0 0 25 24"><path d="m11 10 8-7 2 8-5 1zM15 6.500l1 5.500M11 10l9-1M16 6l5 5" fill="#ddd" stroke="#222" /></symbol>
    <symbol id="meshface" viewBox="0 0 25 24"><path d="M2.500 4.500h14v12h-14z" fill="url(#gb)" stroke="#174055" stroke-width="1.200" /><use href="#mesh" /></symbol>
    <symbol id="meshedge" viewBox="0 0 25 24"><path d="M6.500 3v17" stroke="#2b7096" stroke-width="2" /><use href="#mesh" /></symbol>
    <symbol id="meshpoint" viewBox="0 0 25 24"><circle cx="5.500" cy="8" r="2.500" fill="#4f9bc4" stroke="#174f70" stroke-width="1.300" /><use href="#mesh" /></symbol>
    <symbol id="pf" viewBox="0 0 20 20"><path d="M4 4.500h12v2l-4.500 4V17h-3v-6.500L4 6.500z" fill="#d6a5e8" stroke="#6c2b88" stroke-width="1.200" /></symbol>
    <symbol id="wfs" viewBox="0 0 20 20"><path d="M1 1.500h12v2L8 8l-3-1-4-4z" fill="#fff" stroke="#333" /><path d="M4 5.500h12v2L11 12l-3-1-4-4z" fill="#fff" stroke="#333" /><path d="M7 9.500h12v1.500l-4.500 4v4h-3v-4L7 11z" fill="#eee" stroke="#333" stroke-width="1.100" /></symbol>
    <symbol id="pfs" viewBox="0 0 20 20"><path d="M1 1.500h12v2L8 8l-3-1-4-4z" fill="#c084d8" stroke="#4d1766" /><path d="M4 5.500h12v2L11 12l-3-1-4-4z" fill="#c084d8" stroke="#4d1766" /><path d="M7 9.500h12v1.500l-4.500 4v4h-3v-4L7 11z" fill="#d6a5e8" stroke="#4d1766" stroke-width="1.100" /></symbol>
    <symbol id="curoff" viewBox="0 0 20 20"><path d="M2 1v14l3-3 3 6 2-1-2-6h4z" fill="#f2f2f2" stroke="#ccc" /><path d="M8 4v3l5 5h-2l3 6 2-1-2-5h5z" fill="#c4c4c4" /></symbol>
    <symbol id="tag" viewBox="0 0 20 20"><path d="M2 6q3-4 7-4l9 5v4l-5 5L3 11z" fill="#eee" stroke="#333" stroke-width="1.200" /><path d="m3 7 9 4.500L18 7M12 11.500V16" fill="none" stroke="#333" /><circle cx="7" cy="5.500" r="1.500" fill="#fff" stroke="#333" /><path d="m10 7 3-2" stroke="#333" /></symbol>
  </svg>

  <div class="window">
    <header class="titlebar">
      <div class="brand">
        <svg class="mark" viewBox="0 0 30 30" aria-hidden="true"><path d="M10 1.500 16.500 1Q18.500 1 17 3.500L12 9" fill="none" stroke="#d8261c" stroke-width="2.200" /><path d="M12 8.500Q17.500 9.500 14.500 15 11 21.500 1.500 25L8 12.500M4 12.500 8.500 11.500" fill="none" stroke="#d8261c" stroke-width="2" /><path d="M28.500 11.500H22q-3.500.5-1.500 3.500l4.500 4q2 3.500-1.500 4H16" fill="none" stroke="#d8261c" stroke-width="2.600" /></svg>
        <span class="name"><b>SOLID</b><span>WORKS</span></span>
      </div>
      <nav class="menus"><button v-for="m in menus" :key="m">{{ m }}</button></nav>
      <button class="ib pin" aria-label="Pin menu"><svg class="ic"><use href="#pin" /></svg></button>
      <div class="quick">
        <button class="ib" aria-label="Home"><svg class="ic"><use href="#home" /></svg></button>
        <span class="gap6"></span>
        <button class="ib" aria-label="New"><svg class="ic"><use href="#new" /></svg></button>
        <button class="drop" aria-label="New options"><svg class="ic"><use href="#down" /></svg></button>
        <template v-for="q in quick" :key="q.icon">
          <button class="ib" :aria-label="q.label"><svg class="ic"><use :href="'#' + q.icon" /></svg></button>
          <button class="drop" :aria-label="q.label + ' options'"><svg class="ic"><use href="#down" /></svg></button>
        </template>
        <div class="pick"><button class="on" aria-label="Select"><svg class="ic"><use href="#cursor" /></svg></button><button aria-label="Select options"><svg class="ic"><use href="#down" /></svg></button></div>
        <button class="ib wide" aria-label="Rebuild"><svg class="ic"><use href="#traffic" /></svg></button>
        <button class="ib wide" aria-label="File properties"><svg class="ic"><use href="#list" /></svg></button>
        <button class="ib wide" aria-label="Options"><svg class="ic"><use href="#gear" /></svg></button>
        <button class="drop" aria-label="Options menu"><svg class="ic"><use href="#down" /></svg></button>
      </div>
      <span class="doc">ThinFeatureDem...</span>
      <div class="sys">
        <button aria-label="Login"><svg class="ic"><use href="#person" /></svg></button>
        <button class="help" aria-label="Help">?</button>
        <button aria-label="Help options"><svg class="ic"><use href="#down" /></svg></button>
        <button aria-label="Minimize"><svg class="ic"><use href="#winmin" /></svg></button>
        <button aria-label="Span displays"><svg class="ic"><use href="#winsplit" /></svg></button>
        <button aria-label="Maximize"><svg class="ic"><use href="#winmax" /></svg></button>
        <button aria-label="Close"><svg class="ic"><use href="#winclose" /></svg></button>
      </div>
    </header>

    <section class="ribbon">
      <div class="group g1">
        <button class="big tall"><svg class="ic"><use href="#extrude" /></svg><span>Extruded<br />Boss/Base</span></button>
        <button class="big tall"><svg class="ic"><use href="#revolve" /></svg><span>Revolved<br />Boss/Base</span></button>
        <div class="stack"><button v-for="b in bossStack" :key="b.icon"><svg class="ic"><use :href="'#' + b.icon" /></svg>{{ b.label }}</button></div>
      </div>
      <div class="group g2">
        <button class="big tall"><svg class="ic"><use href="#cut" /></svg><span>Extruded<br />Cut</span></button>
        <button class="big"><svg class="ic"><use href="#holewiz" /></svg><span>Hole Wizard</span><svg class="ic more"><use href="#down" /></svg></button>
        <button class="big tall"><svg class="ic"><use href="#revcut" /></svg><span>Revolved<br />Cut</span></button>
        <div class="stack"><button v-for="b in cutStack" :key="b.icon"><svg class="ic"><use :href="'#' + b.icon" /></svg>{{ b.label }}</button></div>
      </div>
      <div class="group g3">
        <button class="big"><svg class="ic"><use href="#fillet" /></svg><span>Fillet</span><svg class="ic more"><use href="#down" /></svg></button>
        <button class="big"><svg class="ic"><use href="#linpat" /></svg><span>Linear Pattern</span><svg class="ic more"><use href="#down" /></svg></button>
        <div class="stack"><button v-for="b in detailStack" :key="b.icon"><svg class="ic"><use :href="'#' + b.icon" /></svg>{{ b.label }}</button></div>
        <div class="stack"><button v-for="b in shapeStack" :key="b.icon"><svg class="ic"><use :href="'#' + b.icon" /></svg>{{ b.label }}</button></div>
      </div>
      <div class="group g4">
        <button class="big"><svg class="ic"><use href="#refgeo" /></svg><span>Referenc...</span><svg class="ic more"><use href="#down" /></svg></button>
        <button class="big"><svg class="ic"><use href="#curves" /></svg><span>Curves</span><svg class="ic more"><use href="#down" /></svg></button>
      </div>
      <button class="big pressed"><svg class="ic"><use href="#instant" /></svg><span>Instant3D</span></button>
    </section>

    <div class="tabrow">
      <div class="tabs"><button v-for="(t, i) in tabs" :key="t" :class="{ active: i === 0 }">{{ t }}</button></div>
      <div class="mdi">
        <button class="ib" aria-label="Dock left"><svg class="ic"><use href="#dockl" /></svg></button>
        <button class="ib" aria-label="Dock right"><svg class="ic"><use href="#dockr" /></svg></button>
        <button class="ib" aria-label="Minimize document"><svg class="ic"><use href="#mmin" /></svg></button>
        <button class="ib" aria-label="Restore document"><svg class="ic"><use href="#mrest" /></svg></button>
        <button class="ib" aria-label="Close document"><svg class="ic"><use href="#mclose" /></svg></button>
      </div>
    </div>

    <main class="work">
      <aside class="panel">
        <div class="topgrip"><i class="dot"></i></div>
        <div class="ptabs">
          <button v-for="(p, i) in panelTabs" :key="p.icon" :class="{ active: i === 0 }" :aria-label="p.label"><svg class="ic"><use :href="'#' + p.icon" /></svg></button>
          <button class="next" aria-label="More tabs"><svg viewBox="0 0 10 12" width="10" height="12"><path d="m2 1 5 5-5 5" fill="none" stroke="#666" stroke-width="1.800" /></svg></button>
        </div>
        <label class="filter"><svg class="ic"><use href="#funnel" /></svg><input v-model="filterText" type="text" aria-label="Filter tree" /></label>
        <button class="rootitem"><svg class="ic"><use href="#part" /></svg><span>ThinFeatureDemo&nbsp; (Default&lt;&lt;Defaul</span></button>
        <div class="gold"></div>
        <ul class="tree">
          <li v-for="(n, i) in tree" :key="i" :class="{ child: n.child }">
            <button class="exp" :class="n.state" :aria-label="'Expand ' + n.label" v-if="n.state"></button>
            <span class="exp" v-else></span>
            <svg class="ic"><use :href="'#' + n.icon" /></svg><span>{{ n.label }}</span>
          </li>
        </ul>
        <div class="bluebar"></div>
        <div class="hscroll">
          <button aria-label="Scroll left"><svg viewBox="0 0 10 12" width="10" height="12"><path d="M8 1 3 6l5 5" fill="none" stroke="#555" stroke-width="1.800" /></svg></button>
          <div class="track"><div class="thumb"></div></div>
          <button aria-label="Scroll right"><svg viewBox="0 0 10 12" width="10" height="12"><path d="m2 1 5 5-5 5" fill="none" stroke="#555" stroke-width="1.800" /></svg></button>
        </div>
        <div class="handle"><i class="dot"></i></div>
      </aside>

      <section class="view">
        <svg class="model" viewBox="274 157 924 670" preserveAspectRatio="xMinYMin meet" role="img" aria-label="Isometric view of the part">
          <g stroke="#000" stroke-width="1.300" stroke-linejoin="round">
            <!-- thin revolve -->
            <path d="M1066 629 1169 571C1170 592 1162 628 1140 638L1040 696C1058 683 1066 657 1066 629z" fill="url(#outb)" />
            <path d="M864 513C865 545 872 576 886 602L994 701C1012 704 1028 703 1044 692C1060 680 1067 655 1066 629L864 513z" fill="#242455" />
            <path d="M864 513 966 455 1169 571 1066 629z" fill="#242455" />
            <path d="M867 514 966 457C967 510 1005 585 1060 625L998 591C998 600 995 615 979 615 957 614 934 580 933 552z" fill="url(#inner)" />
            <path d="M1066 628 998 590C998 603 995 614 980 614 957 614 934 580 933 552L865 514 966 456 1167 571z" fill="none" stroke-width="3.400" />
            <path d="M1066 628 998 590C998 603 995 614 980 614 957 614 934 580 933 552L865 514 966 456 1167 571z" fill="none" stroke="#30306f" stroke-width=".9" />
            <!-- solid revolve -->
            <path d="M899 724 999 667C999 690 988 718 966 732L868 790C890 780 899 754 899 724z" fill="url(#outo)" />
            <path d="M701 609C703 712 779 797 850 796 885 793 899 758 899 724z" fill="#66311a" />
            <path d="M701 609 800 552 999 667 899 724z" fill="#c8693b" />
            <!-- base plate -->
            <path d="M301 417 467 321 800 513 634 609z" fill="#c8693b" />
            <path d="M467 321 634 225 966 417 800 513z" fill="#4f4fad" />
            <path d="M301 417 634 609v38L301 455z" fill="#66311a" />
            <path d="M634 609 800 513v38L634 647z" fill="#9c4e26" />
            <path d="M800 513 966 417v38L800 551z" fill="#393984" />
            <!-- orange boss -->
            <path d="M367 378 467 321 567 378 467 436z" fill="#c8693b" />
            <path d="M367 378 467 436v38L367 417z" fill="#66311a" />
            <path d="M467 436 567 378v39L467 474z" fill="#9c4e26" />
            <!-- square hole -->
            <path d="M534 513 634 456v38L567 532z" fill="#9c4e26" />
            <path d="M634 456 733 513 700 532 634 494z" fill="#66311a" />
            <path d="M634 494 700 532 634 571 567 532z" fill="#fff" />
            <!-- thin boss -->
            <path d="M500 283 634 206 767 283V321L650 388 634 379V341L600 321V359L584 369 500 321z" fill="#4f4fad" stroke="none" />
            <path d="M600 321V359L584 369 634 400 634 341z" fill="#4f4fad" stroke="none" />
            <path d="M500 283 584 331v38L500 321z" fill="#242455" />
            <path d="M584 331 600 321v38L584 369z" fill="#393984" />
            <path d="M634 341 650 350v38L634 379z" fill="#242455" />
            <path d="M650 350 767 283v38L650 388z" fill="#393984" />
            <path d="M534 283 634 226v38L567 302z" fill="#393984" />
            <path d="M634 226 733 283 700 302 634 264z" fill="#242455" />
            <path d="M500 283 634 206 767 283 650 350 634 341 733 283 634 226 534 283 600 321 584 331z" fill="#4f4fad" />
            <!-- thin groove -->
            <path d="M668 417 800 341V360L701 417 700 436z" fill="#393984" />
            <path d="M800 341 933 417 900 436V417L800 360z" fill="#242455" />
            <path d="M701 417 766 455 750 465 700 436z" fill="#242455" />
            <path d="M900 417 801 475 817 484 900 436z" fill="#393984" />
          </g>
          <!-- triad -->
          <path d="M324 759V738" stroke="#1d6a1d" stroke-width="5" /><path d="M318 740 324 727l6 13q-6 3-12 0z" fill="#2f8f2b" stroke="#0d430c" />
          <path d="m324 759 19 10" stroke="#b52a12" stroke-width="4.500" /><path d="m340 773 5-9 6 11z" fill="#dd2b1b" stroke="#7b160a" />
          <path d="m324 759-18 9" stroke="#1a1aa0" stroke-width="4.500" /><path d="m303 764 6 10-12 .5z" fill="#3535d6" stroke="#101070" />
          <path d="m320 717 3.500 5v6m0-6 3.500-5" fill="none" stroke="#2c9b2c" />
          <path d="m350 770 7 10m0-10-7 10" fill="none" stroke="#d8302a" />
          <path d="M290 770h5l-5 10h6" fill="none" stroke="#3030b8" />
        </svg>
        <div class="hud">
          <template v-for="v in viewTools" :key="v.icon">
            <button class="vt" :aria-label="v.label"><svg class="ic"><use :href="'#' + v.icon" /></svg></button>
            <button v-if="v.more" class="vm" :aria-label="v.label + ' options'"><svg class="ic"><use href="#downgrey" /></svg></button>
          </template>
        </div>
        <div class="task"><button v-for="t in taskPane" :key="t.icon" :class="{ on: t.on }" :aria-label="t.label"><svg class="ic"><use :href="'#' + t.icon" /></svg></button></div>
        <span class="iso">*Isometric</span>
      </section>
    </main>

    <div class="sheets">
      <div class="nav">
        <button aria-label="First"><svg class="ic" viewBox="0 0 20 20"><path d="M6 5v10" stroke="#777a90" stroke-width="2" /><path d="M14 4v12l-6-6z" fill="#777a90" /></svg></button>
        <button aria-label="Previous"><svg class="ic" viewBox="0 0 20 20"><path d="M13 4v12l-6-6z" fill="#777a90" /></svg></button>
        <button aria-label="Next"><svg class="ic" viewBox="0 0 20 20"><path d="M7 4v12l6-6z" fill="#777a90" /></svg></button>
        <button aria-label="Last"><svg class="ic" viewBox="0 0 20 20"><path d="M14 5v10" stroke="#777a90" stroke-width="2" /><path d="M6 4v12l6-6z" fill="#777a90" /></svg></button>
      </div>
      <button class="sheet current">Model</button>
      <button class="sheet">3D Views</button>
      <button class="sheet">Motion Study 1</button>
      <span class="fill"></span>
    </div>

    <div class="filters">
      <i class="grip"></i>
      <button class="ib f" aria-label="Toggle filters"><svg class="ic"><use href="#pf" /></svg></button>
      <button class="ib f" aria-label="Clear all filters"><svg class="ic"><use href="#wfs" /></svg></button>
      <button class="ib f" aria-label="Select all filters"><svg class="ic"><use href="#pfs" /></svg></button>
      <div class="pick low"><button class="on" aria-label="Selection tool"><svg class="ic"><use href="#cursor" /></svg></button><button aria-label="Selection options"><svg class="ic"><use href="#down" /></svg></button></div>
      <button class="ib f" disabled aria-label="Select over geometry"><svg class="ic"><use href="#curoff" /></svg></button>
      <i class="bar"></i>
      <div class="fset">
        <button v-for="f in filtersA" :key="f" :aria-label="'Filter ' + f"><svg class="fi"><use :href="'#' + f" /><use href="#fnl" /></svg></button>
        <button class="off" disabled aria-label="Filter midpoint"><svg class="fi"><use href="#midpoint" /></svg></button>
        <button v-for="f in filtersB" :key="f" :class="{ light: f === 'connpoint' }" :aria-label="'Filter ' + f"><svg class="fi"><use :href="'#' + f" /><use href="#fnl" /></svg></button>
      </div>
      <i class="bar end"></i>
    </div>

    <footer class="status">
      <span class="msg">SOLIDWORKS Premium 2019 SP3.0</span>
      <span class="cell blank"></span>
      <span class="cell mode">Editing Part</span>
      <span class="cell blank2"></span>
      <button class="cell units">IPS<svg class="ic"><use href="#up" /></svg></button>
      <button class="ib tagb" aria-label="Tags"><svg class="ic"><use href="#tag" /></svg></button>
      <svg class="resize" viewBox="0 0 12 12" aria-hidden="true"><path d="M9 0h3v3H9zM9 4h3v3H9zM5 4h3v3H5zM9 8h3v3H9zM5 8h3v3H5zM1 8h3v3H1z" fill="#bbb" /></svg>
    </footer>
  </div>
</template>

<style>
body { margin: 0; background: #fff; }
</style>

<style scoped>
* { box-sizing: border-box; }
button { font: inherit; color: inherit; background: none; border: 0; padding: 0; margin: 0; display: block; white-space: nowrap; }
.defs { position: absolute; width: 0; height: 0; }
.window { min-height: 100vh; display: flex; flex-direction: column; padding-top: 8px; border: 1px solid #1883d7; background: #fff; font: 14px/19px "Open Sans", "Noto Sans", sans-serif; color: #111; overflow: hidden; }
.ic { width: 20px; height: 20px; display: block; flex: none; }
.ib { width: 20px; flex: none; display: flex; align-items: center; justify-content: center; }

.titlebar { height: 33px; display: flex; align-items: center; background: #f7f7f7; border-bottom: 1px solid #888; }
.brand { width: 145px; height: 37px; margin-left: 10px; align-self: flex-start; flex: none; display: flex; align-items: center; padding-left: 5px; background: linear-gradient(115deg, #fff 35%, #d6d8d8); border: 1px solid #888; border-top: 0; position: relative; z-index: 1; color: #d8261c; }
.mark { width: 30px; height: 30px; }
.name { font: italic 14px/20px "DejaVu Sans", sans-serif; margin-left: 3px; display: flex; padding-top: 4px; }
.name span { font-weight: 200; }
.menus { display: grid; grid-template-columns: 36px 39px 45px 51px 47px 66px 44px; margin-left: 28px; }
.menus button { text-align: left; }
.pin { margin-left: 7px; }
.quick { display: flex; align-items: center; align-self: stretch; margin-left: 6px; padding-left: 15px; border-left: 2px solid #999; }
.gap6 { width: 6px; }
.drop { width: 19px; display: flex; justify-content: center; }
.pick { display: flex; height: 26px; border: 1px solid #888; margin-left: -2px; background: #f7f7f7; }
.pick button { width: 11px; display: flex; align-items: center; justify-content: center; overflow: hidden; }
.pick .on { width: 25px; background: #b0b0b0; }
.wide { width: 25px; }
.pick + .wide { margin-left: 1px; }
.doc { margin-left: 2px; flex: 1; font-size: 13px; }
.sys { display: grid; grid-template-columns: 26px 26px 13px 26px 26px 26px 25px; }
.sys button { display: flex; align-items: center; justify-content: center; }
.sys .help { font-weight: 700; font-size: 18px; color: #444; }

.ribbon { height: 87px; display: flex; background: #f7f7f7; border-bottom: 1px solid #888; font-size: 13px; }
.group { display: grid; margin: 6px 0 2px; border-right: 1px solid #bbb; }
.g1 { grid-template-columns: 71px 71px 1fr; width: 312px; padding-left: 6px; }
.g2 { grid-template-columns: 66px 82px 66px 1fr; width: 339px; }
.g3 { grid-template-columns: 40px 94px 69px 1fr; width: 297px; }
.g4 { grid-template-columns: 72px 52px; width: 127px; }
.big { display: flex; flex-direction: column; align-items: center; justify-content: flex-start; padding-top: 5px; text-align: center; }
.big.tall { padding-top: 12px; }
.big .more { margin-top: 13px; }
.big.pressed { width: 72px; margin: 6px 0 2px; padding-top: 12px; background: #b0b0b0; border: 1px solid #666; color: #222; }
.stack { padding-left: 3px; }
.g1 .stack { padding-left: 2px; }
.stack button { display: flex; align-items: center; gap: 6px; height: 26px; }

.tabrow { height: 28px; display: flex; justify-content: space-between; background: #fff; }
.tabs { display: grid; grid-template-columns: 79px 62px 75px 98px 74px 136px 173px 57px; color: #222; }
.tabs button { background: #d4d4d4; border-left: 1px solid #888; border-bottom: 1px solid #888; }
.tabs button:last-child { border-right: 1px solid #888; }
.tabs .active { background: #f7f7f7; border-left: 0; font-weight: 700; color: #444; }
.mdi { display: flex; gap: 6px; padding: 2px 10px 2px 0; }

.work { flex: 1; display: flex; min-height: 0; }
.panel { width: 273px; flex: none; background: #f7f7f7; border-right: 1px solid #888; position: relative; display: flex; flex-direction: column; padding: 4px 2px 5px 1px; z-index: 2; }
.topgrip { height: 20px; border-top: 1px solid #bbb; border-bottom: 1px solid #bbb; display: flex; align-items: center; justify-content: center; }
.dot { width: 6px; height: 6px; border-radius: 50%; background: #ddd; border: 1px solid #888; display: block; }
.ptabs { display: flex; margin-top: 5px; height: 26px; border-bottom: 1px solid #aaa; }
.ptabs button { width: 40px; background: #d4d4d4; border-top: 1px solid #888; border-left: 1px solid #888; display: flex; align-items: center; justify-content: center; }
.ptabs button:nth-child(5) { width: 41px; border-right: 1px solid #888; }
.ptabs .active { background: #f7f7f7; border-left-color: #f7f7f7; }
.ptabs .next { margin-left: auto; width: 20px; background: none; border: 0; }
.filter { margin: 0 3px 0 4px; height: 32px; border: 1px solid #bbb; display: flex; align-items: center; }
.filter input { flex: 1; min-width: 0; border: 0; background: none; outline: none; font: inherit; }
.rootitem { display: flex; align-items: center; height: 24px; padding-left: 3px; gap: 3px; width: 100%; }
.gold { height: 5px; background: #e6b22e; border-bottom: 1px solid #a5701c; flex: none; position: relative; z-index: 1; }
.tree { list-style: none; margin: -5px 0 0; padding: 0; }
.tree li { display: flex; align-items: center; height: 24px; }
.tree li > span:last-child { margin-left: 4px; white-space: nowrap; }
.exp { width: 22px; height: 12px; margin-right: 3px; flex: none; }
.exp.closed, .exp.open { display: flex; align-items: center; padding-left: 8px; }
.exp.closed::before { content: ""; border: 4px solid transparent; border-left: 4px solid #555; border-right: 0; }
.exp.open::before { content: ""; border: 4px solid transparent; border-top: 4px solid #555; border-bottom: 0; }
.child .exp { margin-right: 26px; }
.bluebar { height: 5px; flex: none; background: #2f8fcb; border-bottom: 1px solid #1a2f9a; }
.hscroll { margin-top: auto; height: 20px; display: flex; background: #f0f0f0; }
.hscroll button { width: 21px; display: flex; align-items: center; justify-content: center; }
.track { flex: 1; }
.thumb { width: 66%; height: 100%; background: #cdcdcd; }
.handle { position: absolute; right: -12px; top: 296px; width: 12px; height: 49px; background: #f7f7f7; border: 1px solid #888; border-left: 0; display: flex; align-items: center; justify-content: flex-start; padding-left: 2px; }

.view { flex: 1; position: relative; min-width: 0; border-right: 1px solid #888; }
.model { width: 100%; height: 100%; display: block; position: absolute; }
.hud { position: absolute; top: 5px; left: 282px; display: flex; }
.vt { width: 26px; padding-left: 3px; opacity: 0.92; }
.vm { width: 14px; display: flex; justify-content: center; }
.task { position: absolute; right: 0; top: 54px; width: 32px; border: 1px solid #888; border-right: 0; border-bottom: 0; }
.task button { width: 100%; height: 30px; background: #d4d4d4; border-bottom: 1px solid #888; display: flex; align-items: center; justify-content: center; }
.task .on { background: #f7f7f7; }
.iso { position: absolute; left: 11px; bottom: 1px; font: 500 18px/22px Lato, sans-serif; color: #111; }

.sheets { height: 21px; display: flex; background: #f7f7f7; font-size: 15px; }
.nav { display: flex; margin-left: 27px; border-top: 1px solid #111; }
.nav button { width: 20px; height: 20px; background: #a9abbd; border: 1px solid #777; }
.nav .ic { width: 18px; height: 18px; }
.sheet { height: 20px; width: 144px; background: #d4d4d4; border-top: 1px solid #888; border-left: 1px solid #888; color: #333; line-height: 19px; padding-right: 12px; }
.sheet.current { width: 76px; background: #f7f7f7; border: 0; font-weight: 700; color: #111; padding: 0 0 0 3px; }
.sheet.current + .sheet { width: 89px; padding: 0; }
.fill { flex: 1; border-top: 1px solid #888; border-left: 1px solid #888; height: 20px; }

.filters { height: 33px; display: flex; align-items: center; background: #f7f7f7; border-bottom: 1px solid #888; padding: 2px 0 0 4px; }
.grip { width: 3px; height: 26px; border-left: 3px dotted #aaa; margin-right: 6px; }
.f { width: 27px; }
.low { margin-left: 0; height: 27px; width: 46px; }
.low .on { width: 31px; padding-right: 4px; }
.low button:last-child { width: 13px; }
.bar { width: 1px; height: 22px; background: #999; margin: 0 6px 0 2px; }
.bar.end { height: 31px; margin-left: 6px; }
.fset { display: flex; }
.fset button { width: 27px; height: 26px; background: #b0b0b0; border: 1px solid #666; }
.fset .light { background: #f0f0f0; }
.fset .off { background: none; border-color: transparent; }
.fi { width: 25px; height: 24px; display: block; }

.status { height: 21px; display: flex; align-items: center; background: #f7f7f7; padding: 2px 0 0 1px; }
.msg { flex: 1; }
.cell { height: 19px; border-left: 1px solid #ccc; flex: none; }
.blank { width: 8px; }
.mode { width: 87px; padding-left: 3px; }
.blank2 { width: 16px; }
.units { display: flex; align-items: center; gap: 31px; width: 178px; padding-left: 50px; }
.resize { width: 12px; height: 12px; margin: 4px 1px 0 12px; }
</style>
